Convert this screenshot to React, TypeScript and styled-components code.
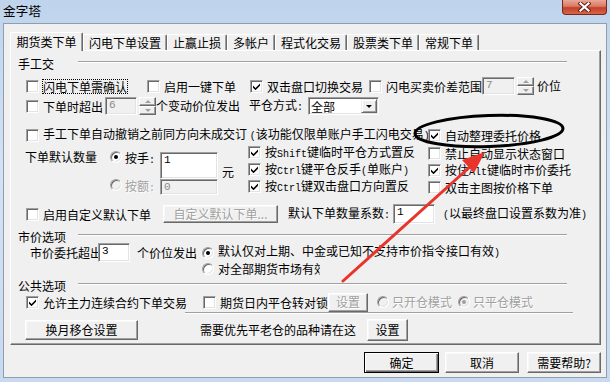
import type { ReactNode } from 'react';
import styled, { createGlobalStyle } from 'styled-components';

const GlobalStyle = createGlobalStyle`
  html, body {
    margin: 0;
    padding: 0;
    background: #c6d9ee;
  }
  body {
    font-family: "Noto Sans CJK SC", "Liberation Sans", sans-serif;
    font-size: 12px;
    color: #000;
  }
  * {
    box-sizing: border-box;
  }
`;

const Window = styled.div`
  position: relative;
  width: 610px;
  height: 382px;
  display: flex;
  flex-direction: column;
  overflow: hidden;
  background: linear-gradient(180deg, #bfd4ec 0%, #d3e2f3 45%, #c8daee 100%);
`;

const TitleBar = styled.div`
  flex: none;
  height: 23px;
  display: flex;
  align-items: flex-start;
  justify-content: space-between;
  padding-left: 3px;
`;

const Title = styled.div`
  font-size: 12.5px;
  line-height: 21px;
  letter-spacing: 0.3px;
`;

const CloseButton = styled.div`
  width: 45px;
  height: 15px;
  margin-right: 3px;
  border: 1px solid #74281e;
  border-top: none;
  border-radius: 0 0 4px 4px;
  background: linear-gradient(180deg, #eaa797 0%, #d87a63 45%, #c53f27 55%, #d5664c 100%);
  display: flex;
  align-items: center;
  justify-content: center;
`;

const Client = styled.div`
  flex: 1;
  margin: 0 3px 4px 3px;
  padding: 8px 5px 0 6px;
  background: #f0f0f0;
  border: 1px solid #8e9db0;
  display: flex;
  flex-direction: column;
`;

const TabStrip = styled.div`
  flex: none;
  height: 18px;
  display: flex;
  align-items: flex-end;
`;

const Tab = styled.div<{ $active?: boolean }>`
  position: relative;
  z-index: ${(p) => (p.$active ? 1 : 0)};
  height: ${(p) => (p.$active ? 19 : 16)}px;
  margin-bottom: ${(p) => (p.$active ? -1 : 0)}px;
  padding: ${(p) => (p.$active ? '1px 5.5px 0' : '0 5px')};
  line-height: ${(p) => (p.$active ? 16 : 15)}px;
  background: #f0f0f0;
  border-top: 1px solid #fff;
  border-left: 1px solid #fff;
  border-right: 1px solid #696969;
  border-radius: 2px 2px 0 0;
  box-shadow: inset -1px 0 #a0a0a0;
  white-space: nowrap;
`;

const Panel = styled.div`
  flex: none;
  height: 295px;
  border: 1px solid;
  border-color: #fff #696969 #696969 #fff;
  box-shadow: inset -1px -1px #a0a0a0;
  display: flex;
  flex-direction: column;
`;

const Row = styled.div<{ $h: number; $mt?: number; $pl?: number }>`
  flex: none;
  display: flex;
  align-items: center;
  height: ${(p) => p.$h}px;
  margin-top: ${(p) => p.$mt ?? 0}px;
  padding-left: ${(p) => p.$pl ?? 0}px;
  white-space: nowrap;
`;

const GroupLabel = styled.span`
  width: 67px;
  padding-left: 7px;
  flex: none;
`;

const Rule = styled.div<{ $w: number; $ml?: number; $mt?: number }>`
  flex: none;
  width: ${(p) => p.$w}px;
  height: 2px;
  margin-left: ${(p) => p.$ml ?? 0}px;
  margin-top: ${(p) => p.$mt ?? 0}px;
  margin-bottom: 3px;
  border-top: 1px solid #a0a0a0;
  border-bottom: 1px solid #fff;
`;

const Text = styled.span<{ $ml?: number; $w?: number; $muted?: boolean; $clip?: boolean }>`
  flex: none;
  margin-left: ${(p) => p.$ml ?? 0}px;
  width: ${(p) => (p.$w ? `${p.$w}px` : 'auto')};
  overflow: ${(p) => (p.$clip ? 'hidden' : 'visible')};
  color: ${(p) => (p.$muted ? '#a0a0a0' : '#000')};
  text-shadow: ${(p) => (p.$muted ? '1px 1px 0 #fff' : 'none')};
  line-height: 14px;
`;

const Latin = styled.span`
  font-family: "Liberation Mono", monospace;
  font-size: 10px;
`;

const CheckItem = styled.div<{ $ml?: number; $h?: number }>`
  flex: none;
  display: flex;
  align-items: center;
  height: ${(p) => (p.$h ? `${p.$h}px` : 'auto')};
  margin-left: ${(p) => p.$ml ?? 0}px;
  white-space: nowrap;
`;

const Box = styled.span`
  position: relative;
  flex: none;
  width: 13px;
  height: 13px;
  background: #fff;
  border: 1px solid;
  border-color: #a0a0a0 #fff #fff #a0a0a0;
  box-shadow: inset 1px 1px #696969, inset -1px -1px #e3e3e3;
  display: flex;
  align-items: center;
  justify-content: center;
`;

const CheckLabel = styled.span<{ $w?: number; $focus?: boolean }>`
  margin-left: 4px;
  width: ${(p) => (p.$w ? `${p.$w}px` : 'auto')};
  line-height: 13px;
  outline: ${(p) => (p.$focus ? '1px dotted #000' : 'none')};
  outline-offset: 0;
`;

const RadioDot = styled.span<{ $disabled?: boolean }>`
  flex: none;
  width: 12px;
  height: 12px;
  border-radius: 50%;
  background: ${(p) => (p.$disabled ? '#f0f0f0' : '#fff')};
  border: 1px solid;
  border-color: #a0a0a0 #fff #fff #a0a0a0;
  box-shadow: inset 1px 1px #696969, inset -1px -1px #e3e3e3;
  display: flex;
  align-items: center;
  justify-content: center;
`;

const Pip = styled.span<{ $disabled?: boolean }>`
  width: 4px;
  height: 4px;
  border-radius: 50%;
  background: ${(p) => (p.$disabled ? '#a0a0a0' : '#000')};
`;

const Field = styled.div<{ $w: number; $h: number; $disabled?: boolean; $ml?: number; $mt?: number }>`
  flex: none;
  width: ${(p) => p.$w}px;
  height: ${(p) => p.$h}px;
  margin-left: ${(p) => p.$ml ?? 0}px;
  margin-top: ${(p) => p.$mt ?? 0}px;
  padding: 1px 3px;
  background: ${(p) => (p.$disabled ? '#f0f0f0' : '#fff')};
  color: ${(p) => (p.$disabled ? '#8a8a8a' : '#000')};
  border: 1px solid;
  border-color: #a0a0a0 #fff #fff #a0a0a0;
  box-shadow: inset 1px 1px #696969, inset -1px -1px #e3e3e3;
  font-family: "Liberation Mono", monospace;
  font-size: 11px;
  line-height: 13px;
`;

const SelectBox = styled(Field)`
  display: flex;
  align-items: center;
  justify-content: space-between;
  padding: 1px 1px 1px 2px;
  font-family: "Noto Sans CJK SC", sans-serif;
  font-size: 12px;
`;

const DropButton = styled.span`
  width: 16px;
  height: 14px;
  background: #f0f0f0;
  border: 1px solid;
  border-color: #f0f0f0 #696969 #696969 #f0f0f0;
  box-shadow: inset 1px 1px #fff, inset -1px -1px #a0a0a0;
  display: flex;
  align-items: center;
  justify-content: center;
`;

const Caret = styled.span<{ $up?: boolean; $color?: string }>`
  width: 0;
  height: 0;
  border-left: ${(p) => (p.$color ? 3 : 4)}px solid transparent;
  border-right: ${(p) => (p.$color ? 3 : 4)}px solid transparent;
  ${(p) => (p.$up ? 'border-bottom' : 'border-top')}: ${(p) => (p.$color ? 3 : 4)}px solid ${(p) => p.$color ?? '#000'};
`;

const Spinner = styled.div<{ $ml?: number }>`
  flex: none;
  width: 17px;
  height: 18px;
  margin-left: ${(p) => p.$ml ?? 0}px;
  display: flex;
  flex-direction: column;
`;

const SpinHalf = styled.div`
  flex: 1;
  background: #f0f0f0;
  border: 1px solid;
  border-color: #fff #696969 #696969 #fff;
  box-shadow: inset -1px -1px #a0a0a0;
  display: flex;
  align-items: center;
  justify-content: center;
`;

const Button = styled.div<{ $w: number; $h: number; $ml?: number; $disabled?: boolean; $default?: boolean }>`
  flex: none;
  width: ${(p) => p.$w}px;
  height: ${(p) => p.$h}px;
  margin-left: ${(p) => p.$ml ?? 0}px;
  display: flex;
  align-items: center;
  justify-content: center;
  background: #f0f0f0;
  border: 1px solid;
  border-color: ${(p) => (p.$default ? '#000' : '#fff #696969 #696969 #fff')};
  box-shadow: ${(p) =>
    p.$default
      ? 'inset 1px 1px #fff, inset -1px -1px #696969, inset -2px -2px #a0a0a0'
      : 'inset -1px -1px #a0a0a0, inset 1px 1px #f8f8f8'};
  color: ${(p) => (p.$disabled ? '#a0a0a0' : '#000')};
  text-shadow: ${(p) => (p.$disabled ? '1px 1px 0 #fff' : 'none')};
  white-space: nowrap;
  line-height: 14px;
`;

const QtyBlock = styled.div`
  flex: none;
  height: 51px;
  display: flex;
  align-items: flex-start;
  padding-left: 14px;
`;

const QtyLabel = styled.div`
  width: 72px;
  margin-top: 5px;
  line-height: 14px;
`;

const ChoiceCol = styled.div`
  margin-left: 13px;
  margin-top: 6px;
  display: flex;
  flex-direction: column;
`;

const ChoiceRow = styled.div<{ $h: number }>`
  display: flex;
  align-items: flex-start;
  height: ${(p) => p.$h}px;
`;

const Unit = styled.div`
  margin-left: 4px;
  margin-top: 21px;
  line-height: 12px;
`;

const CheckCol = styled.div<{ $ml: number; $w?: number; $mt?: number }>`
  flex: none;
  display: flex;
  flex-direction: column;
  width: ${(p) => (p.$w ? `${p.$w}px` : 'auto')};
  margin-left: ${(p) => p.$ml}px;
  margin-top: ${(p) => p.$mt ?? 0}px;
`;

const Footer = styled.div`
  flex: none;
  display: flex;
  justify-content: flex-end;
  margin-top: 7px;
`;

const Overlay = styled.svg`
  position: absolute;
  left: 0;
  top: 0;
  width: 610px;
  height: 382px;
  pointer-events: none;
`;

const Tick = () => (
  <svg width="7" height="7" viewBox="0 0 7 7">
    <path d="M0 2.5 L2.5 5 L7 0.5 V2.8 L2.5 7.2 L0 4.7 Z" fill="#000" />
  </svg>
);

type CheckProps = { label: ReactNode; checked?: boolean; ml?: number; w?: number; h?: number; focus?: boolean };

const Check = ({ label, checked, ml, w, h, focus }: CheckProps) => (
  <CheckItem $ml={ml} $h={h}>
    <Box>{checked && <Tick />}</Box>
    <CheckLabel $w={w} $focus={focus}>
      {label}
    </CheckLabel>
  </CheckItem>
);

const Radio = ({ on, disabled }: { on?: boolean; disabled?: boolean }) => (
  <RadioDot $disabled={disabled}>{on && <Pip $disabled={disabled} />}</RadioDot>
);

const Spin = ({ ml }: { ml?: number }) => (
  <Spinner $ml={ml}>
    <SpinHalf>
      <Caret $up $color="#a0a0a0" />
    </SpinHalf>
    <SpinHalf>
      <Caret $color="#a0a0a0" />
    </SpinHalf>
  </Spinner>
);

const GroupHead = ({ title, h, mt }: { title: string; h: number; mt?: number }) => (
  <Row $h={h} $mt={mt}>
    <GroupLabel>{title}</GroupLabel>
    <Rule $w={489} />
  </Row>
);

const tabs = ['期货类下单', '闪电下单设置', '止赢止损', '多帐户', '程式化交易', '股票类下单', '常规下单'];

const App = () => {
  return (
    <>
      <GlobalStyle />
      <Window>
        <TitleBar>
          <Title>金字塔</Title>
          <CloseButton>
            <svg width="13" height="10" viewBox="0 0 13 10">
              <path d="M2.5 1.5 L10.5 8.5 M10.5 1.5 L2.5 8.5" stroke="#5a1c14" strokeWidth="4" strokeLinecap="square" />
              <path d="M2.5 1.5 L10.5 8.5 M10.5 1.5 L2.5 8.5" stroke="#fff" strokeWidth="2.2" strokeLinecap="square" />
            </svg>
          </CloseButton>
        </TitleBar>
        <Client>
          <TabStrip>
            {tabs.map((name, index) => (
              <Tab key={name} $active={index === 0}>
                {name}
              </Tab>
            ))}
          </TabStrip>
          <Panel>
            <GroupHead title="手工交" h={24} />
            <Row $h={22} $pl={15}>
              <Check label="闪电下单需确认" focus />
              <Check label="启用一键下单" ml={20} />
              <Check label="双击盘口切换交易" checked ml={14} />
              <Check label="闪电买卖价差范围" ml={6} />
              <Field $w={33} $h={18} $disabled>
                7
              </Field>
              <Spin ml={2} />
              <Text $ml={3}>价位</Text>
            </Row>
            <Row $h={18} $pl={15}>
              <Check label="下单时超出" />
              <Field $w={32} $h={18} $ml={2} $disabled>
                6
              </Field>
              <Spin ml={2} />
              <Text>个变动价位发出</Text>
              <Text $ml={9} $w={59}>
                平仓方式<Latin>:</Latin>
              </Text>
              <SelectBox $w={71} $h={18}>
                全部
                <DropButton>
                  <Caret $color="#000" />
                </DropButton>
              </SelectBox>
            </Row>
            <Row $h={20} $mt={10} $pl={15}>
              <Check
                w={385}
                label={
                  <>
                    手工下单自动撤销之前同方向未成交订 <Latin>(</Latin>该功能仅限单账户手工闪电交易<Latin>)</Latin>
                  </>
                }
              />
              <Check label="自动整理委托价格" checked />
            </Row>
            <QtyBlock>
              <QtyLabel>下单默认数量</QtyLabel>
              <ChoiceCol>
                <ChoiceRow $h={28}>
                  <Radio on />
                  <Text $ml={3} $w={35}>
                    按手<Latin>:</Latin>
                  </Text>
                  <Field $w={58} $h={27} $mt={1}>
                    1
                  </Field>
                </ChoiceRow>
                <ChoiceRow $h={16}>
                  <Radio disabled />
                  <Text $ml={3} $w={35} $muted>
                    按额<Latin>:</Latin>
                  </Text>
                  <Field $w={58} $h={16} $disabled>
                    0
                  </Field>
                </ChoiceRow>
              </ChoiceCol>
              <Unit>元</Unit>
              <CheckCol $ml={14} $w={180} $mt={-1}>
                <Check
                  h={17}
                  checked
                  label={
                    <>
                      按<Latin>Shift</Latin>键临时平仓方式置反
                    </>
                  }
                />
                <Check
                  h={17}
                  checked
                  label={
                    <>
                      按<Latin>Ctrl</Latin>键平仓反手<Latin>(</Latin>单账户<Latin>)</Latin>
                    </>
                  }
                />
                <Check
                  h={17}
                  checked
                  label={
                    <>
                      按<Latin>Ctrl</Latin>键双击盘口方向置反
                    </>
                  }
                />
              </CheckCol>
              <CheckCol $ml={0}>
                <Check h={17} label="禁止自动显示状态窗口" />
                <Check
                  h={17}
                  checked
                  label={
                    <>
                      按住<Latin>Alt</Latin>键临时市价委托
                    </>
                  }
                />
                <Check h={17} label="双击主图按价格下单" />
              </CheckCol>
            </QtyBlock>
            <Row $h={20} $mt={8} $pl={15}>
              <Check label="启用自定义默认下单" w={108} />
              <Button $w={115} $h={18} $ml={12} $disabled>
                自定义默认下单...
              </Button>
              <Text $ml={10} $w={105}>
                默认下单数量系数<Latin>:</Latin>
              </Text>
              <Field $w={42} $h={20}>
                1
              </Field>
              <Text $ml={8}>
                <Latin>(</Latin>以最终盘口设置系数为准<Latin>)</Latin>
              </Text>
            </Row>
            <GroupHead title="市价选项" h={16} mt={4} />
            <Row $h={17} $pl={19}>
              <Text $w={68}>市价委托超出</Text>
              <Field $w={32} $h={19}>
                3
              </Field>
              <Text $ml={7} $w={65}>
                个价位发出
              </Text>
              <Radio on />
              <Text $ml={4}>
                默认仅对上期、中金或已知不支持市价指令接口有效<Latin>)</Latin>
              </Text>
            </Row>
            <Row $h={15} $pl={191}>
              <Radio />
              <Text $ml={4} $w={102} $clip>
                对全部期货市场有效
              </Text>
            </Row>
            <GroupHead title="公共选项" h={16} mt={1} />
            <Row $h={18} $pl={15}>
              <Check label="允许主力连续合约下单交易" checked />
              <Check label="期货日内平仓转对锁" ml={16} w={108} />
              <Button $w={40} $h={19} $disabled>
                设置
              </Button>
              <CheckItem $ml={9}>
                <Radio disabled />
                <Text $ml={3} $muted>
                  只开仓模式
                </Text>
              </CheckItem>
              <CheckItem $ml={6}>
                <Radio on disabled />
                <Text $ml={3} $muted>
                  只平仓模式
                </Text>
              </CheckItem>
            </Row>
            <Rule $w={388} $ml={174} $mt={1} />
            <Row $h={26} $pl={14}>
              <Button $w={113} $h={20}>
                换月移仓设置
              </Button>
              <Text $ml={62} $w={156}>
                需要优先平老仓的品种请在这
              </Text>
              <Button $w={41} $h={22} $ml={11}>
                设置
              </Button>
            </Row>
          </Panel>
          <Footer>
            <Button $w={75} $h={21} $default>
              确定
            </Button>
            <Button $w={74} $h={21} $ml={6}>
              取消
            </Button>
            <Button $w={74} $h={21} $ml={8}>
              需要帮助?
            </Button>
          </Footer>
        </Client>
        <Overlay viewBox="0 0 610 382">
          <ellipse
            cx="489"
            cy="131"
            rx="74"
            ry="15.5"
            fill="none"
            stroke="#000"
            strokeWidth="3"
            transform="rotate(-2 489 131)"
          />
          <line x1="343" y1="281" x2="472" y2="165" stroke="#e8342b" strokeWidth="3" strokeLinecap="round" />
          <polygon points="485,152 474,173 462,160" fill="#e8342b" />
        </Overlay>
      </Window>
    </>
  );
};

export default App;
